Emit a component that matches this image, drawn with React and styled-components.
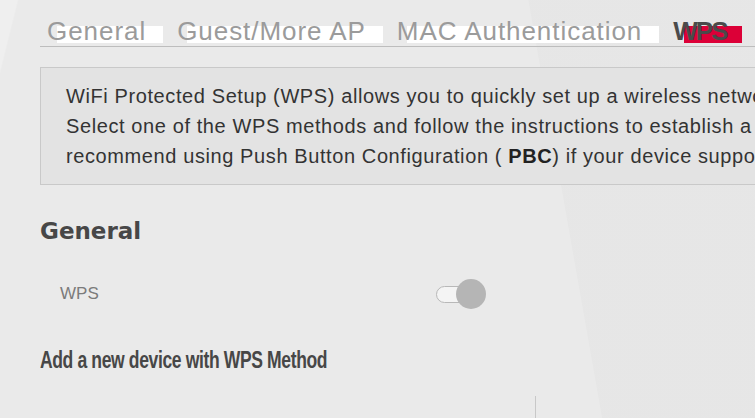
import React, { useState } from 'react';
import styled, { createGlobalStyle } from 'styled-components';

const GlobalStyle = createGlobalStyle`
  html, body {
    margin: 0;
    padding: 0;
    overflow: hidden;
  }
  body {
    font-family: "Liberation Sans", Arial, sans-serif;
  }
`;

const Shell = styled.div`
  width: 100vw;
  height: 100vh;
  overflow: hidden;
  background-color: #eaeaea;
  background-image:
    linear-gradient(80deg, transparent 0%, transparent 72.6%, rgba(0,0,0,0.014) 72.7%, rgba(0,0,0,0.014) 100%),
    linear-gradient(104deg, rgba(255,255,255,0.25) 0%, rgba(255,255,255,0.25) 2%, transparent 2.2%);
`;

const Page = styled.div`
  width: 1200px;
  padding: 16px 0 0 40px;
  box-sizing: border-box;
`;

const TabBar = styled.div`
  display: flex;
  gap: 7px;
  border-bottom: 1px solid #bdbdbd;
`;

const Tab = styled.div`
  position: relative;
  z-index: 0;
  padding: 0 17px 0 7px;
  font-size: 26px;
  line-height: 30px;
  white-space: nowrap;
  font-weight: ${p => (p.active ? 700 : 400)};
  color: ${p => (p.active ? '#4a4a4a' : '#9b9b9b')};
  letter-spacing: ${p => (p.active ? '-2px' : '0.95px')};

  &::before {
    content: '';
    position: absolute;
    z-index: -1;
    left: ${p => (p.active ? '18px' : '17px')};
    right: ${p => (p.active ? '2px' : '0')};
    top: 10px;
    bottom: 3px;
    background: ${p => (p.active ? '#dc0037' : '#ffffff')};
  }
`;

const InfoBox = styled.div`
  margin-top: 20px;
  border: 1px solid #c9c9c9;
  border-right: none;
  background: #e3e3e3;
  padding: 13px 0 13px 25px;
  font-size: 20px;
  line-height: 30px;
  letter-spacing: 0.6px;
  color: #333;
  white-space: nowrap;

  b {
    color: #222;
  }
`;

const SectionTitle = styled.h2`
  margin: 0;
  font-family: ${p => (p.narrow ? '"Liberation Sans", Arial, sans-serif' : '"DejaVu Sans", sans-serif')};
  font-size: ${p => (p.narrow ? '24px' : '23px')};
  letter-spacing: ${p => (p.narrow ? '-0.5px' : '0')};
  font-weight: 700;
  line-height: 30px;
  color: #474747;
  white-space: nowrap;
  transform: ${p => (p.narrow ? 'scaleX(0.73)' : 'none')};
  transform-origin: left center;
`;

const Section = styled.section`
  margin-top: ${p => p.top}px;
`;

const FieldRow = styled.div`
  display: grid;
  grid-template-columns: 376px auto;
  align-items: center;
  margin-top: 32px;
  padding-left: 20px;
  height: 32px;
`;

const FieldLabel = styled.span`
  font-size: 17px;
  color: #7b7b7b;
`;

const Switch = styled.button`
  position: relative;
  width: 50px;
  height: 30px;
  padding: 0;
  border: none;
  background: none;
  cursor: pointer;

  &::before {
    content: '';
    position: absolute;
    left: 0;
    top: 7px;
    width: 38px;
    height: 15px;
    border: 1px solid #b8b8b8;
    border-radius: 9px;
    background: ${p => (p.on ? '#f5c1ce' : '#f4f4f4')};
  }
`;

const Knob = styled.span`
  position: absolute;
  top: 0;
  left: 20px;
  width: 30px;
  height: 30px;
  border-radius: 50%;
  background: #b5b5b5;
`;

const Methods = styled.div`
  display: grid;
  grid-template-columns: 495px 1fr;
  margin-top: 21px;
  height: 40px;
`;

const MethodCol = styled.div`
  border-left: ${p => (p.divider ? '1px solid #c8c8c8' : 'none')};
`;

export default function App() {
  const [on, setOn] = useState(false);
  const tabs = ['General', 'Guest/More AP', 'MAC Authentication', 'WPS', 'WMM'];

  return (
    <Shell>
      <GlobalStyle />
      <Page>
        <TabBar>
          {tabs.map(t => (
            <Tab key={t} active={t === 'WPS'}>{t}</Tab>
          ))}
        </TabBar>

        <InfoBox>
          WiFi Protected Setup (WPS) allows you to quickly set up a wireless network with strong security, without having to configure security settings manually.
          <br />
          Select one of the WPS methods and follow the instructions to establish a WPS connection. We
          <br />
          recommend using Push Button Configuration ( <b>PBC</b>) if your device supports it.
        </InfoBox>

        <Section top={31}>
          <SectionTitle>General</SectionTitle>
          <FieldRow>
            <FieldLabel>WPS</FieldLabel>
            <Switch on={on} onClick={() => setOn(!on)} aria-label="WPS">
              <Knob />
            </Switch>
          </FieldRow>
        </Section>

        <Section top={35}>
          <SectionTitle narrow>Add a new device with WPS Method</SectionTitle>
          <Methods>
            <MethodCol />
            <MethodCol divider />
          </Methods>
        </Section>
      </Page>
    </Shell>
  );
}
